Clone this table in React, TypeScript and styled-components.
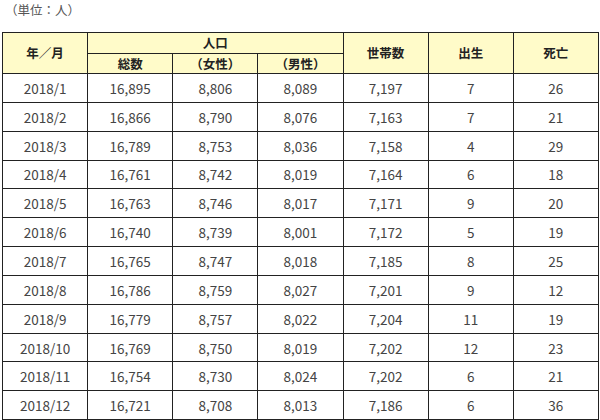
import React from 'react';
import styled, { createGlobalStyle } from 'styled-components';

const GlobalStyle = createGlobalStyle`
  html, body {
    margin: 0;
    padding: 0;
    background: #ffffff;
  }
  body {
    font-family: "Noto Sans CJK JP", "Noto Sans", sans-serif;
    color: #333333;
  }
`;

const rows = [
  { month: '2018/1', total: '16,895', female: '8,806', male: '8,089', households: '7,197', births: 7, deaths: 26 },
  { month: '2018/2', total: '16,866', female: '8,790', male: '8,076', households: '7,163', births: 7, deaths: 21 },
  { month: '2018/3', total: '16,789', female: '8,753', male: '8,036', households: '7,158', births: 4, deaths: 29 },
  { month: '2018/4', total: '16,761', female: '8,742', male: '8,019', households: '7,164', births: 6, deaths: 18 },
  { month: '2018/5', total: '16,763', female: '8,746', male: '8,017', households: '7,171', births: 9, deaths: 20 },
  { month: '2018/6', total: '16,740', female: '8,739', male: '8,001', households: '7,172', births: 5, deaths: 19 },
  { month: '2018/7', total: '16,765', female: '8,747', male: '8,018', households: '7,185', births: 8, deaths: 25 },
  { month: '2018/8', total: '16,786', female: '8,759', male: '8,027', households: '7,201', births: 9, deaths: 12 },
  { month: '2018/9', total: '16,779', female: '8,757', male: '8,022', households: '7,204', births: 11, deaths: 19 },
  { month: '2018/10', total: '16,769', female: '8,750', male: '8,019', households: '7,202', births: 12, deaths: 23 },
  { month: '2018/11', total: '16,754', female: '8,730', male: '8,024', households: '7,202', births: 6, deaths: 21 },
  { month: '2018/12', total: '16,721', female: '8,708', male: '8,013', households: '7,186', births: 6, deaths: 36 },
];

const App: React.FC = () => (
  <>
    <GlobalStyle />
    <Page>
      <Unit>（単位：人）</Unit>
      <Table>
        <colgroup>
          {[...Array(7)].map((_, i) => (
            <col key={i} />
          ))}
        </colgroup>
        <thead>
          <HeadRow $h={21}>
            <Th rowSpan={2}>年／月</Th>
            <Th colSpan={3}>人口</Th>
            <Th rowSpan={2}>世帯数</Th>
            <Th rowSpan={2}>出生</Th>
            <Th rowSpan={2}>死亡</Th>
          </HeadRow>
          <HeadRow $h={20}>
            <Th>総数</Th>
            <Th>（女性）</Th>
            <Th>（男性）</Th>
          </HeadRow>
        </thead>
        <tbody>
          {rows.map(r => (
            <BodyRow key={r.month}>
              <Td>{r.month}</Td>
              <Td>{r.total}</Td>
              <Td>{r.female}</Td>
              <Td>{r.male}</Td>
              <Td>{r.households}</Td>
              <Td>{r.births}</Td>
              <Td>{r.deaths}</Td>
            </BodyRow>
          ))}
        </tbody>
      </Table>
    </Page>
  </>
);

// Styles
const Page = styled.div`
  width: 600px;
  padding: 0 2px;
  box-sizing: border-box;
`;

const Unit = styled.div`
  height: 32px;
  padding: 1px 0 0 3px;
  box-sizing: border-box;
  font-size: 12.5px;
  line-height: 17px;
  color: #555555;
`;

const Table = styled.table`
  width: 596px;
  table-layout: fixed;
  border-collapse: collapse;
  border: 1px solid #222222;

  col {
    width: 85.14px;
  }
`;

const HeadRow = styled.tr<{ $h: number }>`
  height: ${({ $h }) => $h}px;
`;

const BodyRow = styled.tr`
  height: 28.85px;
`;

const Th = styled.th`
  background: #fffbc9;
  border: 1px solid #222222;
  padding: 0;
  font-size: 12.5px;
  font-weight: 700;
  line-height: 16px;
  color: #222222;
  text-align: center;
  vertical-align: middle;
`;

const Td = styled.td`
  border: 1px solid #222222;
  padding: 0;
  font-size: 13.5px;
  font-weight: 400;
  line-height: 16px;
  color: #444444;
  text-align: center;
  vertical-align: middle;
`;

export default App;
